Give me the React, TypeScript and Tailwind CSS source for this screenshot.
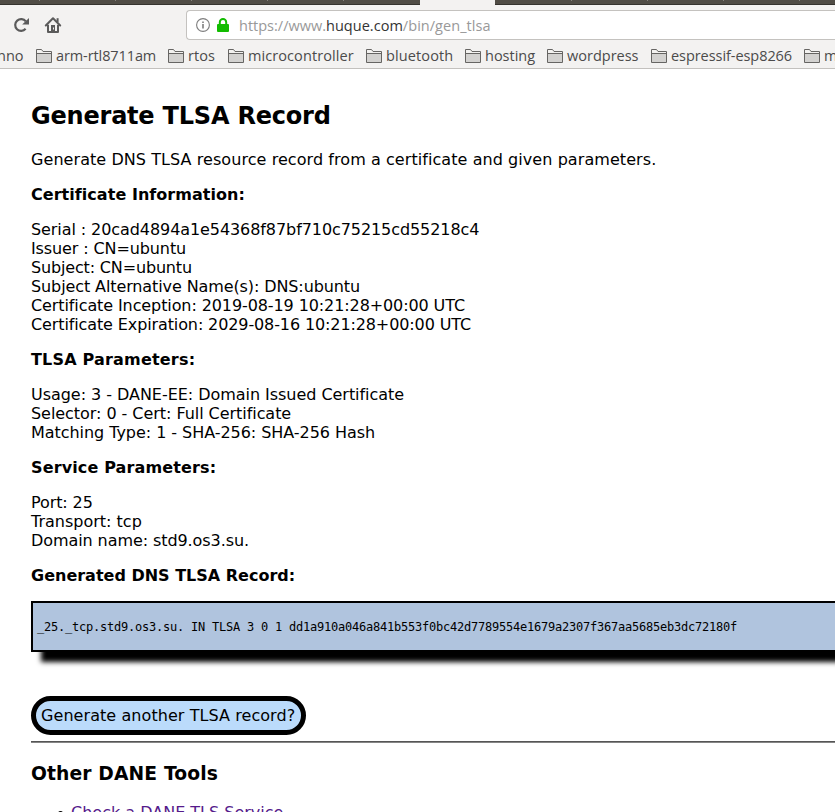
import React from "react";

const bookmarks = [
  { label: "arm-rtl8711am", box: "w-[132px]", text: "tracking-[-0.1px]" },
  { label: "rtos", box: "w-[60px]", text: "tracking-[0.05px]" },
  { label: "microcontroller", box: "w-[138px]", text: "tracking-[0.08px]" },
  { label: "bluetooth", box: "w-[99px]", text: "tracking-[0.12px]" },
  { label: "hosting", box: "w-[82px]", text: "tracking-[0px]" },
  { label: "wordpress", box: "w-[104px]", text: "tracking-[0px]" },
  { label: "espressif-esp8266", box: "w-[153px]", text: "tracking-[-0.06px]" },
  { label: "m", box: "w-[70px]", text: "tracking-[0px]" },
];

const certificate = [
  { text: "Serial : 20cad4894a1e54368f87bf710c75215cd55218c4", cls: "tracking-[-0.08px]" },
  { text: "Issuer : CN=ubuntu", cls: "tracking-[-0.11px]" },
  { text: "Subject: CN=ubuntu", cls: "tracking-[-0.16px]" },
  { text: "Subject Alternative Name(s): DNS:ubuntu", cls: "tracking-[-0.105px]" },
  { text: "Certificate Inception: 2019-08-19 10:21:28+00:00 UTC", cls: "tracking-[-0.1px]" },
  { text: "Certificate Expiration: 2029-08-16 10:21:28+00:00 UTC", cls: "tracking-[-0.115px]" },
];

const tlsa = [
  { text: "Usage: 3 - DANE-EE: Domain Issued Certificate", cls: "tracking-[-0.04px]" },
  { text: "Selector: 0 - Cert: Full Certificate", cls: "tracking-[-0.05px]" },
  { text: "Matching Type: 1 - SHA-256: SHA-256 Hash", cls: "tracking-[-0.05px]" },
];

const service = [
  { text: "Port: 25", cls: "tracking-[-0.1px]" },
  { text: "Transport: tcp", cls: "tracking-[0px]" },
  { text: "Domain name: std9.os3.su.", cls: "tracking-[-0.08px]" },
];

function Lines({ rows }: { rows: { text: string; cls: string }[] }) {
  return (
    <div className="mt-4">
      {rows.map((r) => (
        <p key={r.text} className={r.cls}>{r.text}</p>
      ))}
    </div>
  );
}

function Folder() {
  return (
    <svg width="16" height="14" viewBox="0 0 16 14" className="shrink-0" fill="none">
      <path d="M.5 13.5V.5H5.5L7 2.5H15.5V13.5Z" fill="#f3f2f0" stroke="#666563" />
      <path d="M1 5H15V13H1Z" fill="#d3d2d0" />
      <path d="M.5 4.5H15.5" stroke="#666563" />
    </svg>
  );
}

function Separators({ className }: { className: string }) {
  return (
    <div className={"flex h-[5px] gap-[75px] overflow-hidden border-b border-[#35332e] bg-[#504c45] " + className}>
      {[0, 1, 2, 3, 4].map((i) => (
        <span key={i} className="h-px w-px shrink-0 bg-[#85827c]" />
      ))}
    </div>
  );
}

function Chrome() {
  return (
    <header className="h-[69px] border-b border-[#c3c1be] bg-[#f3f2f1] font-['Open_Sans',sans-serif] text-[#4b4b4b]">
      <div className="flex h-[5px]">
        <Separators className="w-[420px] pl-[39px]" />
        <div className="w-[75px]" />
        <Separators className="w-[340px] pl-[76px]" />
      </div>
      <div className="flex h-[40px] pt-[5px]">
        <svg width="18" height="18" viewBox="0 0 18 18" className="ml-3 mt-[6px]" fill="none">
          <path d="M13.6 12.8A5.9 5.9 0 1 1 13.8 5.4" stroke="#5b5b5b" strokeWidth="2.2" />
          <path d="M17 2V8.6H10.2Z" fill="#5b5b5b" />
        </svg>
        <svg width="18" height="18" viewBox="0 0 18 18" className="ml-[14px] mt-[6px]" fill="none">
          <path d="M1.8 9.5L9 2.3L16.2 9.5" stroke="#5b5b5b" strokeWidth="2" strokeLinecap="round" strokeLinejoin="round" />
          <path d="M4 8.8V16H14V8.8" stroke="#5b5b5b" strokeWidth="2" strokeLinejoin="round" />
          <path d="M13.6 2.2V6" stroke="#5b5b5b" strokeWidth="2" />
          <path d="M7 9H11V16H7Z" fill="#5b5b5b" />
          <path d="M9 11.5H10V13.5H9Z" fill="#f3f2f1" />
        </svg>
        <div className="ml-[124px] flex h-[30px] flex-1 items-center rounded-l-[4px] border border-r-0 border-[#c4c2bf] bg-white">
          <svg width="14" height="14" viewBox="0 0 14 14" className="ml-[9px]" fill="none">
            <circle cx="7" cy="7" r="6.4" stroke="#7d7d7d" strokeWidth="1.1" />
            <path d="M6.2 6H7.8V10.6H6.2ZM6.2 3.4H7.8V4.9H6.2Z" fill="#7d7d7d" />
          </svg>
          <svg width="12" height="14" viewBox="0 0 12 14" className="ml-[7px]" fill="none">
            <path d="M2.8 7V4.3A3.2 3.2 0 0 1 9.2 4.3V7" stroke="#12bc00" strokeWidth="2" />
            <rect y="6" width="12" height="8" rx="1" fill="#12bc00" />
          </svg>
          <div className="ml-[10px] whitespace-pre pt-px text-[14.5px] leading-5 text-[#999]">
            <span>https://www.</span>
            <span className="tracking-[0.03px] text-[#333]">huque.com</span>
            <span className="tracking-[0.04px]">/bin/gen_tlsa</span>
          </div>
        </div>
      </div>
      <nav className="flex h-[22px] overflow-hidden text-[14.5px] leading-[22px]">
        <span className="-ml-[3px] w-[39px] shrink-0">nno</span>
        {bookmarks.map((b) => (
          <span key={b.label} className={"flex shrink-0 items-center gap-1 " + b.box}>
            <Folder />
            <span className={b.text}>{b.label}</span>
          </span>
        ))}
      </nav>
    </header>
  );
}

export default function App() {
  return (
    <div className="h-[812px] w-[835px] overflow-hidden bg-white font-['DejaVu_Sans',sans-serif] text-base leading-[19px] text-black">
      <Chrome />
      <main className="whitespace-nowrap pl-[31px] pt-[33px]">
        <h2 className="text-2xl font-bold leading-[29px] tracking-[-0.21px]">Generate TLSA Record</h2>
        <p className="mt-[19px] tracking-[0.068px]">Generate DNS TLSA resource record from a certificate and given parameters.</p>
        <p className="mt-4 font-bold tracking-[0.04px]">Certificate Information:</p>
        <Lines rows={certificate} />
        <p className="mt-4 font-bold tracking-[0.19px]">TLSA Parameters:</p>
        <Lines rows={tlsa} />
        <p className="mt-4 font-bold tracking-[0.13px]">Service Parameters:</p>
        <Lines rows={service} />
        <p className="mt-4 font-bold">Generated DNS TLSA Record:</p>
        <pre className="mt-4 h-[51px] w-[840px] border-2 border-black bg-[#b0c4de] pl-1 pt-[17px] font-['DejaVu_Sans_Mono',monospace] text-[12px] leading-[14px] tracking-[-0.224px] shadow-[10px_10px_5px_#000]">_25._tcp.std9.os3.su. IN TLSA 3 0 1 dd1a910a046a841b553f0bc42d7789554e1679a2307f367aa5685eb3dc72180f</pre>
        <a className="mt-11 flex h-[39px] w-[275px] items-center rounded-[20px] border-5 border-black bg-[#bbdbfb] pl-[5px] tracking-[0.07px]">
          Generate another TLSA record?
        </a>
        <hr className="mt-[6px] h-[2px] border-t border-b border-t-[#555] border-b-[#858585]" />
        <h3 className="mt-5 text-[18.72px] font-bold leading-[22px] tracking-[0.125px]">Other DANE Tools</h3>
        <ul className="mt-[18px]">
          <li className="flex pl-[27px]">
            <span className="mr-2 mt-2 size-[5px] rounded-full bg-black" />
            <a className="text-[#551a8b] underline">Check a DANE TLS Service</a>
          </li>
        </ul>
      </main>
    </div>
  );
}
